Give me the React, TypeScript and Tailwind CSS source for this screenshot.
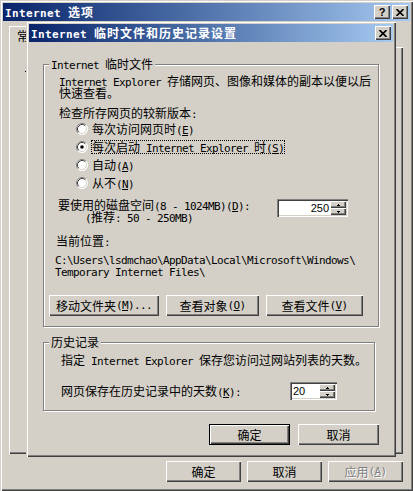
import React from "react";

const HALF = "font-['DejaVu_Sans_Mono'] text-[11px] leading-[0px] tracking-[-0.62px] whitespace-pre";
const HALF_B = "font-['DejaVu_Sans_Mono'] text-[11px] leading-[0px] font-bold tracking-[0.38px] whitespace-pre";
const FULL_B = "font-bold tracking-[1px]";
const RAISED = "shadow-[inset_1px_1px_0_#fff,inset_-1px_-1px_0_#404040,inset_-2px_-2px_0_#808080]";
const FRAME =
	"shadow-[inset_1px_1px_0_#D4D0C8,inset_2px_2px_0_#fff,inset_-1px_-1px_0_#404040,inset_-2px_-2px_0_#808080]";
const SUNKEN =
	"shadow-[inset_1px_1px_0_#808080,inset_2px_2px_0_#404040,inset_-1px_-1px_0_#fff,inset_-2px_-2px_0_#D4D0C8]";

// half-width runs get a mono face (SimSun-like 6px cells), "&x" underlines x
function Mix({ text, bold = false }: { text: string; bold?: boolean }) {
	const out: React.ReactNode[] = [];
	let buf = "";
	let half = false;
	const flush = () => {
		if (!buf) return;
		out.push(
			<span key={out.length} className={half ? (bold ? HALF_B : HALF) : bold ? FULL_B : ""}>
				{buf}
			</span>,
		);
		buf = "";
	};
	for (let i = 0; i < text.length; i++) {
		let c = text[i];
		if (c === "&" && i + 1 < text.length) {
			flush();
			c = text[++i];
			const h = c.charCodeAt(0) < 0x2000;
			out.push(
				<span key={out.length} className={(h ? HALF : "") + " underline underline-offset-[1px]"}>
					{c}
				</span>,
			);
			continue;
		}
		const h = c.charCodeAt(0) < 0x2000;
		if (h !== half) {
			flush();
			half = h;
		}
		buf += c;
	}
	flush();
	return <>{out}</>;
}

function XGlyph() {
	return (
		<svg width="8" height="7" viewBox="0 0 8 7">
			<path d="M0.5 0 L7.5 7 M7.5 0 L0.5 7" stroke="#000" strokeWidth="1.6" fill="none" />
		</svg>
	);
}

function CapBtn({ children }: { children: React.ReactNode }) {
	return (
		<div className={`flex h-[14px] w-[16px] items-center justify-center bg-[#D4D0C8] text-black ${RAISED}`}>
			{children}
		</div>
	);
}

function TitleBar({ title, help }: { title: string; help?: boolean }) {
	return (
		<div className="flex h-[18px] items-center bg-linear-to-r from-[#0A246A] to-[#A6CAF0] px-[2px] text-white">
			<div className="flex-1 whitespace-nowrap">
				<Mix text={title} bold />
			</div>
			<div className="flex gap-[2px]">
				{help && (
					<CapBtn>
						<span className="font-['Liberation_Sans'] text-[11px] font-bold leading-none">?</span>
					</CapBtn>
				)}
				<CapBtn>
					<XGlyph />
				</CapBtn>
			</div>
		</div>
	);
}

function Btn({
	label,
	w,
	def,
	disabled,
}: {
	label: string;
	w: string;
	def?: boolean;
	disabled?: boolean;
}) {
	return (
		<div
			className={`flex h-[21px] items-center justify-center whitespace-nowrap bg-[#D4D0C8] ${w} ${RAISED} ${
				def ? "border border-black" : ""
			} ${disabled ? "text-[#808080] [text-shadow:1px_1px_0_#fff]" : ""}`}
		>
			<Mix text={label} />
		</div>
	);
}

function Radio({ on }: { on?: boolean }) {
	return (
		<svg width="12" height="12" viewBox="0 0 12 12" className="shrink-0">
			<circle cx="6" cy="6" r="5.5" fill="#fff" />
			<path d="M2.11 9.89 A5.5 5.5 0 0 1 9.89 2.11" stroke="#808080" fill="none" />
			<path d="M9.89 2.11 A5.5 5.5 0 0 1 2.11 9.89" stroke="#fff" fill="none" />
			<path d="M2.82 9.18 A4.5 4.5 0 0 1 9.18 2.82" stroke="#404040" fill="none" />
			<path d="M9.18 2.82 A4.5 4.5 0 0 1 2.82 9.18" stroke="#D4D0C8" fill="none" />
			{on && <circle cx="6" cy="6" r="1.8" fill="#000" />}
		</svg>
	);
}

function RadioRow({ label, on, focus }: { label: string; on?: boolean; focus?: boolean }) {
	return (
		<div className="flex h-[18px] items-center gap-[3px] pl-[32px]">
			<Radio on={on} />
			<span
				className={`whitespace-nowrap border ${focus ? "border-dotted border-black" : "border-transparent"}`}
			>
				<Mix text={label} />
			</span>
		</div>
	);
}

function SpinArrow({ up }: { up?: boolean }) {
	return (
		<svg width="3" height="2" viewBox="0 0 3 2" shapeRendering="crispEdges">
			{up ? (
				<>
					<rect x="1" y="0" width="1" height="1" fill="#000" />
					<rect x="0" y="1" width="3" height="1" fill="#000" />
				</>
			) : (
				<>
					<rect x="0" y="0" width="3" height="1" fill="#000" />
					<rect x="1" y="1" width="1" height="1" fill="#000" />
				</>
			)}
		</svg>
	);
}

function Spin({ value, w, right }: { value: string; w: string; right?: boolean }) {
	return (
		<div className={`flex h-[18px] shrink-0 bg-white p-[2px] ${w} ${SUNKEN}`}>
			<div
				className={`flex flex-1 items-center font-['Liberation_Sans'] text-[11px] leading-none ${
					right ? "justify-end pr-[1px]" : "pl-[1px]"
				}`}
			>
				{value}
			</div>
			<div className="flex w-[16px] flex-col">
				<div className={`flex h-[7px] items-center justify-center bg-[#D4D0C8] ${RAISED}`}>
					<SpinArrow up />
				</div>
				<div className={`flex h-[7px] items-center justify-center bg-[#D4D0C8] ${RAISED}`}>
					<SpinArrow />
				</div>
			</div>
		</div>
	);
}

const GROUP = "border border-[#808080] shadow-[inset_1px_1px_0_#fff,1px_1px_0_#fff]";

export default function App() {
	return (
		<div className="font-['Noto_Sans_CJK_SC',sans-serif] text-[12px] leading-[12px] text-black">
			<div className={`relative h-[491px] w-[413px] bg-[#D4D0C8] p-[3px] ${FRAME}`}>
				<TitleBar title="Internet 选项" help />

				<div
					className={`relative mb-[-1px] ml-[6px] mt-[5px] flex h-[22px] w-[52px] items-center bg-[#D4D0C8] pb-[2px] pl-[8px] shadow-[inset_1px_1px_0_#fff,inset_-1px_0_0_#404040,inset_-2px_0_0_#808080]`}
				>
					常规
				</div>
				<div className={`ml-[6px] h-[407px] w-[394px] ${RAISED}`}>
					<div className="pl-[16px] pt-[24px]">
						<div className="h-px w-px bg-black" />
					</div>
				</div>

				<div className="mt-[7px] flex justify-end gap-[6px] pr-[7px]">
					<Btn label="确定" w="w-[75px]" />
					<Btn label="取消" w="w-[75px]" />
					<Btn label="应用(&A)" w="w-[75px]" disabled />
				</div>

				<div className={`absolute left-[26px] top-[21px] z-10 h-[436px] w-[370px] bg-[#D4D0C8] p-[3px] ${FRAME}`}>
					<TitleBar title="Internet 临时文件和历史记录设置" />

					<fieldset className={`ml-[14px] mt-[16px] w-[336px] ${GROUP}`}>
						<legend className="ml-[5px] whitespace-nowrap bg-[#D4D0C8] px-[2px]">
							<Mix text="Internet 临时文件" />
						</legend>
						<div className="whitespace-nowrap pl-[15px] pt-[5px]">
							<Mix text="Internet Explorer 存储网页、图像和媒体的副本以便以后" />
						</div>
						<div className="pl-[15px]">快速查看。</div>
						<div className="mt-[8px] pl-[15px]">
							<Mix text="检查所存网页的较新版本:" />
						</div>
						<div className="mt-[1px]">
							<RadioRow label="每次访问网页时(&E)" />
							<RadioRow label="每次启动 Internet Explorer 时(&S)" on focus />
							<RadioRow label="自动(&A)" />
							<RadioRow label="从不(&N)" />
						</div>
						<div className="mt-[7px] flex pl-[14px]">
							<div className="w-[219px] whitespace-nowrap">
								<div>
									<Mix text="要使用的磁盘空间(8 - 1024MB)(&D):" />
								</div>
								<div className="pl-[27px]">
									<Mix text="(推荐: 50 - 250MB)" />
								</div>
							</div>
							<Spin value="250" w="w-[71px]" right />
						</div>
						<div className="mt-[12px] pl-[12px]">
							<Mix text="当前位置:" />
						</div>
						<div className="mt-[6px] whitespace-nowrap pl-[11px]">
							<div>
								<Mix text="C:\Users\lsdmchao\AppData\Local\Microsoft\Windows\" />
							</div>
							<div>
								<Mix text="Temporary Internet Files\" />
							</div>
						</div>
						<div className="mt-[18px] flex gap-[7px] pb-[10px] pl-[5px]">
							<Btn label="移动文件夹(&M)..." w="w-[110px]" />
							<Btn label="查看对象(&O)" w="w-[93px]" />
							<Btn label="查看文件(&V)" w="w-[97px]" />
						</div>
					</fieldset>

					<fieldset className={`ml-[14px] mt-[9px] w-[332px] ${GROUP}`}>
						<legend className="ml-[5px] whitespace-nowrap bg-[#D4D0C8] px-[2px]">历史记录</legend>
						<div className="whitespace-nowrap pl-[17px] pt-[6px]">
							<Mix text="指定 Internet Explorer 保存您访问过网站列表的天数。" />
						</div>
						<div className="mt-[16px] flex items-center pb-[10px] pl-[17px]">
							<div className="w-[229px] whitespace-nowrap">
								<Mix text="网页保存在历史记录中的天数(&K):" />
							</div>
							<Spin value="20" w="w-[47px]" />
						</div>
					</fieldset>

					<div className="mt-[13px] flex justify-end gap-[8px] pr-[14px]">
						<Btn label="确定" w="w-[81px]" def />
						<Btn label="取消" w="w-[81px]" />
					</div>
				</div>
			</div>
		</div>
	);
}
